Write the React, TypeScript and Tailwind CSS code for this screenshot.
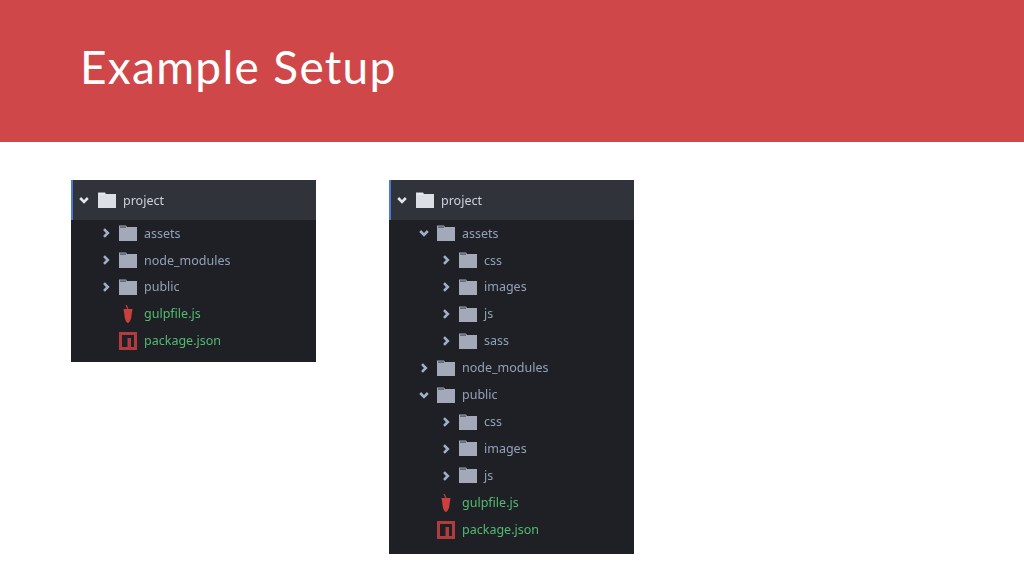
type Kind = "closed" | "open" | "gulp" | "npm";

interface Row {
  name: string;
  kind: Kind;
  depth: number;
}

const SHORT: Row[] = [
  { name: "assets", kind: "closed", depth: 0 },
  { name: "node_modules", kind: "closed", depth: 0 },
  { name: "public", kind: "closed", depth: 0 },
  { name: "gulpfile.js", kind: "gulp", depth: 0 },
  { name: "package.json", kind: "npm", depth: 0 },
];

const LONG: Row[] = [
  { name: "assets", kind: "open", depth: 0 },
  { name: "css", kind: "closed", depth: 1 },
  { name: "images", kind: "closed", depth: 1 },
  { name: "js", kind: "closed", depth: 1 },
  { name: "sass", kind: "closed", depth: 1 },
  { name: "node_modules", kind: "closed", depth: 0 },
  { name: "public", kind: "open", depth: 0 },
  { name: "css", kind: "closed", depth: 1 },
  { name: "images", kind: "closed", depth: 1 },
  { name: "js", kind: "closed", depth: 1 },
  { name: "gulpfile.js", kind: "gulp", depth: 0 },
  { name: "package.json", kind: "npm", depth: 0 },
];

function Chevron({ open, light }: { open: boolean; light?: boolean }) {
  return (
    <svg width="10" height="10" viewBox="0 0 10 10" fill="none" className="shrink-0">
      <path
        d={open ? "M1.2 3 L5 6.8 L8.8 3" : "M3 1.2 L6.8 5 L3 8.8"}
        stroke={light ? "#e4e7ee" : "#9fb0c8"}
        strokeWidth="2.6"
      />
    </svg>
  );
}

function Folder({ light }: { light?: boolean }) {
  return (
    <svg width="18" height="16" viewBox="0 0 18 16" className="mb-[1px] shrink-0">
      <path d="M0 0.5 H7 L8 2 H18 V16 H0 Z" fill={light ? "#dcdee6" : "#a3a9b9"} />
      <path d="M1 1.6 H7 V2.6 H1 Z" fill={light ? "#f0f1f4" : "#3a3e48"} />
    </svg>
  );
}

function GulpIcon() {
  return (
    <svg width="10" height="18" viewBox="0 0 10 18">
      <path d="M3 0 L5 4" stroke="#c9403f" strokeWidth="1.2" />
      <path d="M0.5 4 H9.5 L8 14 Q6 18 5 18 Q3.5 18 2 14 Z" fill="#c9403f" />
    </svg>
  );
}

function NpmIcon() {
  return (
    <svg width="18" height="18" viewBox="0 0 18 18">
      <path fillRule="evenodd" d="M0 0 H18 V18 H0 Z M3 3 V15 H8.5 V6 H12 V15 H15 V3 Z" fill="#b23b3d" />
    </svg>
  );
}

function TreeRow({ row }: { row: Row }) {
  const isFile = row.kind === "gulp" || row.kind === "npm";
  return (
    <div className={`flex h-[26.95px] items-center ${row.depth === 1 ? "pl-[52px]" : "pl-[30px]"}`}>
      <div className="flex w-[18px] shrink-0 items-center">
        {!isFile && <Chevron open={row.kind === "open"} />}
      </div>
      <div className="flex w-[18px] shrink-0 items-center justify-center">
        {row.kind === "gulp" && <GulpIcon />}
        {row.kind === "npm" && <NpmIcon />}
        {!isFile && <Folder />}
      </div>
      <span className={`ml-[7px] pt-[1px] text-[12.5px] ${isFile ? "text-[#52bb70]" : "text-[#93a1b8]"}`}>{row.name}</span>
    </div>
  );
}

function Panel({ rows, className }: { rows: Row[]; className: string }) {
  return (
    <div className={`w-[245px] shrink-0 bg-[#1e2025] font-['Noto_Sans',sans-serif] blur-[0.5px] ${className}`}>
      <div className="flex h-[40px] items-center border-l-[2px] border-[#4a78d8] bg-[#30333a] pl-[6px]">
        <div className="flex w-[19px] shrink-0 items-center">
          <Chevron open light />
        </div>
        <Folder light />
        <span className="ml-[7px] pt-[2px] text-[12.5px] text-[#ccd1db]">project</span>
      </div>
      {rows.map((row, i) => (
        <TreeRow key={i} row={row} />
      ))}
    </div>
  );
}

export default function App() {
  return (
    <div className="h-[576px] w-[1024px] overflow-hidden bg-white">
      <header className="flex h-[142px] items-start bg-[#d04749] pl-20 pt-[34px]">
        <h1 className="font-['Lato',sans-serif] text-[46px] leading-[66px] font-normal tracking-[1.3px] text-white">Example Setup</h1>
      </header>
      <div className="flex items-start gap-[73px] pl-[71px] pt-[38px]">
        <Panel rows={SHORT} className="h-[182px]" />
        <Panel rows={LONG} className="h-[374px]" />
      </div>
    </div>
  );
}
